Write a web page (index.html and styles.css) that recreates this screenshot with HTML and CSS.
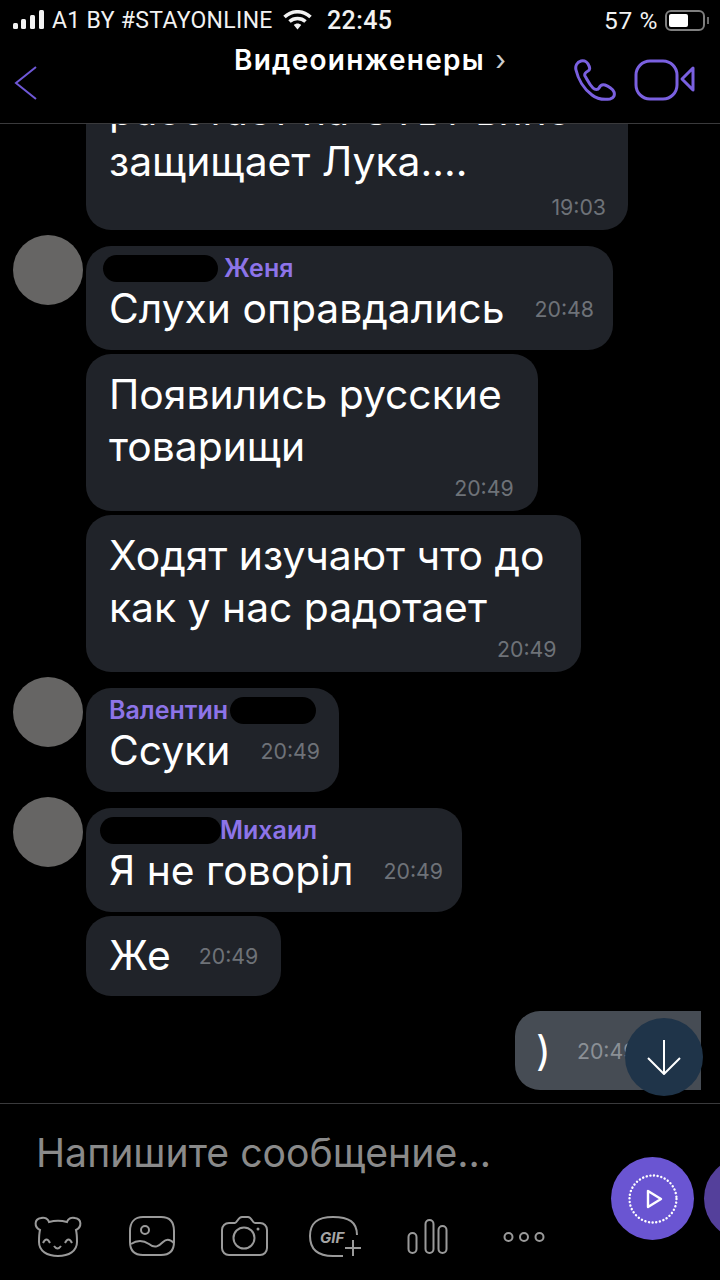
FILE: index.html
```html
<!DOCTYPE html>
<html lang="ru">
<head>
    <meta charset="UTF-8">
    <meta name="viewport" content="width=device-width, initial-scale=1.0">
    <title>Видеоинженеры</title>
    <link rel="stylesheet" href="styles.css">
</head>
<body>
    <div class="screen">
        <div class="status-bar">
            <svg class="signal" width="32" height="20" viewBox="0 0 32 20">
                <rect x="0" y="13" width="5" height="6" rx="1.5"/>
                <rect x="8" y="9" width="5" height="10" rx="1.5"/>
                <rect x="17" y="5" width="5" height="14" rx="1.5"/>
                <rect x="26" y="0" width="5" height="19" rx="1.5"/>
            </svg>
            <span class="carrier">A1 BY #STAYONLINE</span>
            <svg class="wifi" width="29" height="20" viewBox="0 0 29 20">
                <path d="M1.5 7 C9 0 20 0 27.5 7" />
                <path d="M6.5 11.5 C11 7.5 18 7.5 22.5 11.5" />
                <path class="wifi-dot" d="M10.8 15 C13 13 16 13 18.2 15 L14.5 19.5 Z" />
            </svg>
            <span class="clock">22:45</span>
            <span class="battery-text">57 %</span>
            <div class="battery"><div class="battery-fill"></div></div>
            <div class="battery-nub"></div>
        </div>

        <div class="nav">
            <svg class="back" width="24" height="36" viewBox="0 0 24 36">
                <path d="M22 2 L2 18 L22 34" />
            </svg>
            <div class="nav-title">Видеоинженеры <span class="nav-arrow">›</span></div>
            <svg class="nav-phone" width="42" height="42" viewBox="0 0 42 42">
                <path d="M7 2 C3 3 1 7 2 11 C4 20 10 30 18 36 C23 40 29 41 36 40 C40 39 41 36 40 33 C39 30 34 27 31 26 C28 25 26 27 25 29 C24 31 21 31 19 29 C15 25 13 20 11 17 C10 15 12 13 14 12 C16 11 16 9 15 7 C14 4 11 1 7 2 Z" />
            </svg>
            <svg class="nav-video" width="62" height="42" viewBox="0 0 62 42">
                <rect x="2" y="2" width="41" height="38" rx="14" />
                <path d="M59 9 L59 31 L48 20 Z" />
            </svg>
        </div>

        <div class="messages">
            <div class="row">
                <div class="avatar-space"></div>
                <div class="bubble bubble-long">
                    <div class="text">работает на СТБ? вино<br>защищает Лука....</div>
                    <div class="time time-below">19:03</div>
                </div>
            </div>

            <div class="row row-new">
                <div class="avatar"></div>
                <div class="bubble">
                    <div class="sender sender-a"><span class="redact redact-a"></span><span class="name">Женя</span></div>
                    <div class="line"><span class="text">Слухи оправдались</span><span class="time">20:48</span></div>
                </div>
            </div>

            <div class="row">
                <div class="avatar-space"></div>
                <div class="bubble bubble-lines">
                    <div class="text">Появились русские<br>товарищи</div>
                    <div class="time time-below">20:49</div>
                </div>
            </div>

            <div class="row">
                <div class="avatar-space"></div>
                <div class="bubble bubble-lines">
                    <div class="text">Ходят изучают что до<br>как у нас радотает</div>
                    <div class="time time-below">20:49</div>
                </div>
            </div>

            <div class="row row-new">
                <div class="avatar"></div>
                <div class="bubble">
                    <div class="sender"><span class="name">Валентин</span><span class="redact redact-b"></span></div>
                    <div class="line"><span class="text">Ссуки</span><span class="time">20:49</span></div>
                </div>
            </div>

            <div class="row row-new">
                <div class="avatar"></div>
                <div class="bubble">
                    <div class="sender sender-c"><span class="redact redact-c"></span><span class="name">Михаил</span></div>
                    <div class="line"><span class="text">Я не говоріл</span><span class="time">20:49</span></div>
                </div>
            </div>

            <div class="row">
                <div class="avatar-space"></div>
                <div class="bubble bubble-short">
                    <div class="line"><span class="text">Же</span><span class="time">20:49</span></div>
                </div>
            </div>

            <div class="row row-out">
                <div class="bubble bubble-out">
                    <div class="line"><span class="text">)</span><span class="time">20:49</span></div>
                </div>
            </div>

            <div class="scroll-down">
                <svg width="36" height="36" viewBox="0 0 36 36">
                    <path d="M18 1 L18 35 M2 19 L18 35 L34 19" />
                </svg>
            </div>
        </div>

        <div class="composer">
            <div class="composer-main">
                <div class="placeholder">Напишите сообщение...</div>
                <div class="tools">
                    <svg class="tool" viewBox="0 0 93 44">
                        <path d="M30 14 C24 11 24 3 31 2 C35 1 38 3 39 6 C44 4.500 52 4.500 57 6 C58 3 61 1 65 2 C72 3 72 11 66 14 C67 18 67 22 67 26 C67 35 59 40 48 40 C37 40 29 35 29 26 C29 22 29 18 30 14 Z" />
                        <path d="M33 27 Q36.500 20 40 27 M55 27 Q58.500 20 62 27 M44 30 Q47.500 35 51 30" />
                    </svg>
                    <svg class="tool" viewBox="0 0 93 44">
                        <path d="M40 1 L58 1 C67 1 71 6 71 15 L71 26 C71 35 66 39 58 39 L40 39 C32 39 27 35 27 26 L27 15 C27 6 32 1 40 1 Z" />
                        <circle cx="42" cy="14" r="4" />
                        <path d="M28 28 C34 24 40 24 46 28 C52 33 56 30 60 26 C64 22 68 24 71 27" />
                    </svg>
                    <svg class="tool" viewBox="0 0 93 44">
                        <path d="M33 7 L39 7 C41 7 42 1 46 1 L52 1 C56 1 56 7 59 7 L64 7 C68 7 71 10 71 14 L71 32 C71 36 68 39 64 39 L33 39 C29 39 26 36 26 32 L26 14 C26 10 29 7 33 7 Z" />
                        <circle cx="48" cy="22" r="10.500" />
                        <circle class="tool-fill" cx="62" cy="13" r="1.500" />
                    </svg>
                    <svg class="tool" viewBox="0 0 93 44">
                        <path d="M68 19 C68 6 60 1 44 1 C28 1 21 7 21 20 C21 33 28 40 44 40 L54 40" />
                        <path d="M64 24 L64 40 M56 32 L72 32" />
                        <text class="gif-label" x="31" y="27">GIF</text>
                    </svg>
                    <svg class="tool" viewBox="0 0 93 44">
                        <rect x="26.500" y="17" width="8" height="20" rx="4" />
                        <rect x="43.500" y="4" width="8" height="33" rx="4" />
                        <rect x="56.500" y="10" width="8" height="27" rx="4" />
                    </svg>
                    <svg class="tool" viewBox="0 0 93 44">
                        <circle cx="33.500" cy="21" r="4" />
                        <circle cx="49" cy="21" r="4" />
                        <circle cx="64.500" cy="21" r="4" />
                    </svg>
                </div>
            </div>
            <div class="composer-actions">
                <div class="round-btn">
                    <svg width="52" height="52" viewBox="0 0 52 52">
                        <circle class="ring" cx="26" cy="26" r="23.500" />
                        <path class="play" d="M21 18 L21 34 L34 26 Z" />
                    </svg>
                </div>
                <div class="round-btn round-btn-dim"></div>
            </div>
        </div>
    </div>
</body>
</html>
```

FILE: styles.css
```css
body {
    margin: 0;
    background: #000;
    font-family: 'Inter', 'Roboto', sans-serif;
    color: #fff;
}

.screen {
    width: 720px;
    height: 1280px;
    display: flex;
    flex-direction: column;
    overflow: hidden;
    background: #000;
}

/* status bar */
.status-bar {
    height: 40px;
    flex: none;
    display: flex;
    align-items: center;
    padding-left: 13px;
    font-family: 'Roboto', sans-serif;
    font-size: 23px;
    color: #f2f2f2;
}

.signal {
    fill: #f2f2f2;
}

.carrier {
    margin-left: 7px;
    width: 231px;
    letter-spacing: 0.32px;
}

.wifi {
    fill: none;
    stroke: #f2f2f2;
    stroke-width: 3.6;
}

.wifi-dot {
    fill: #f2f2f2;
    stroke: none;
}

.clock {
    margin-left: 15px;
    font-size: 25px;
    font-weight: 500;
    letter-spacing: 0.4px;
}

.battery-text {
    margin-left: auto;
    font-size: 24.5px;
    letter-spacing: 0.6px;
}

.battery {
    width: 40px;
    height: 21px;
    box-sizing: border-box;
    margin-left: 7px;
    padding: 2px;
    border: 2px solid #7f7f7f;
    border-radius: 6px;
}

.battery-fill {
    width: 19px;
    height: 100%;
    background: #fff;
    border-radius: 2px;
}

.battery-nub {
    width: 2px;
    height: 7px;
    margin: 0 11px 0 2px;
    background: #6a6a6a;
}

/* nav */
.nav {
    height: 83px;
    flex: none;
    display: flex;
    align-items: flex-start;
    border-bottom: 1px solid #3a3a3c;
}

.back {
    margin: 25px 0 0 14px;
    fill: none;
    stroke: #6f58d8;
    stroke-width: 2;
}

.nav-title {
    width: 300px;
    margin: 2px 0 0 196px;
    white-space: nowrap;
    font-size: 28px;
    font-weight: 600;
    letter-spacing: 1.25px;
    line-height: 36px;
}

.nav-arrow {
    margin-left: 2px;
    font-weight: 400;
    color: #ccc;
}

.nav-phone {
    margin: 19px 0 0 40px;
    fill: none;
    stroke: #7a60e0;
    stroke-width: 3;
}

.nav-video {
    margin: 19px 0 0 18px;
    fill: none;
    stroke: #7a60e0;
    stroke-width: 3;
    stroke-linejoin: round;
}

/* messages */
.messages {
    position: relative;
    flex: 1;
    min-height: 0;
    display: flex;
    flex-direction: column;
    justify-content: flex-end;
    gap: 4px;
    padding-bottom: 13px;
    overflow: hidden;
}

.row {
    flex: none;
    display: flex;
    align-items: flex-start;
    padding-left: 13px;
}

.row-new {
    margin-top: 12px;
}

.row-out {
    justify-content: flex-end;
    margin-top: 11px;
    padding-right: 19px;
}

.avatar,
.avatar-space {
    width: 70px;
    height: 70px;
    flex: none;
    margin-right: 3px;
}

.avatar {
    margin-top: -11px;
    border-radius: 50%;
    background: #666564;
}

.avatar-space {
    height: 0;
}

.bubble {
    box-sizing: border-box;
    padding: 14px 24px 8px 23px;
    background: #202329;
    border-radius: 25px;
}

.bubble:has(.sender) {
    padding: 9px 19px 16px 23px;
}

.bubble-lines {
    padding-right: 36px;
}

.bubble-lines .time-below {
    margin-right: -12px;
}

.bubble-short {
    padding: 13px 23px 15px 23px;
}

.bubble-long {
    width: 542px;
}

.bubble-long .text {
    line-height: 51px;
}

.bubble-long .time-below {
    margin-top: 4px;
    margin-right: -2px;
}

.bubble-out {
    padding: 13px 0 14px 21px;
    width: 186px;
    background: #464c54;
    border-radius: 25px 0 0 25px;
}

.sender {
    height: 27px;
    display: flex;
    align-items: center;
}

.sender-a {
    margin-left: -6px;
}

.sender-c {
    margin-left: -9px;
}

.name {
    padding-bottom: 1px;
    font-size: 25px;
    font-weight: 600;
    line-height: 25px;
    color: #8d74e8;
    white-space: nowrap;
}

.redact {
    height: 27px;
    background: #000;
    border-radius: 14px;
}

.redact-a {
    width: 115px;
    margin-right: 6px;
}

.redact-b {
    width: 86px;
    margin-left: 2px;
}

.redact-c {
    width: 121px;
    margin-right: -1px;
}

.text {
    font-size: 40.8px;
    line-height: 52px;
    color: #fff;
    white-space: nowrap;
}

.line {
    display: flex;
    align-items: center;
    gap: 30px;
}

.line .time {
    margin-top: 2px;
}

.time {
    font-size: 21.3px;
    line-height: 30px;
    color: #6e7278;
    white-space: nowrap;
}

.time-below {
    padding-top: 1px;
    text-align: right;
}

.bubble-short .line {
    gap: 28px;
}

.bubble-out .line {
    gap: 26px;
}

.bubble-out .time {
    color: #8b9096;
}

.scroll-down {
    position: absolute;
    right: 17px;
    bottom: 7px;
    width: 78px;
    height: 78px;
    display: flex;
    align-items: center;
    justify-content: center;
    border-radius: 50%;
    background: #1f3449;
}

.scroll-down svg {
    fill: none;
    stroke: #fff;
    stroke-width: 2;
}

/* composer */
.composer {
    height: 176px;
    flex: none;
    display: flex;
    border-top: 1px solid #3a3a3c;
    overflow: hidden;
}

.composer-main {
    width: 611px;
    flex: none;
}

.placeholder {
    margin-top: 25px;
    padding-left: 36px;
    font-size: 39.2px;
    line-height: 48px;
    color: #8a8a8a;
    white-space: nowrap;
}

.tools {
    display: flex;
    margin-top: 39px;
    padding-left: 10px;
}

.tool {
    width: 93px;
    height: 44px;
    flex: none;
    fill: none;
    stroke: #9a9a9a;
    stroke-width: 2;
}

.tool-fill {
    fill: #9a9a9a;
    stroke: none;
}

.gif-label {
    font-family: 'Inter', sans-serif;
    font-size: 15px;
    font-weight: 700;
    font-style: italic;
    fill: #a5a5a5;
    stroke: none;
}

.composer-actions {
    flex: none;
    display: flex;
    gap: 10px;
    padding-top: 53px;
}

.round-btn {
    width: 83px;
    height: 83px;
    flex: none;
    display: flex;
    align-items: center;
    justify-content: center;
    border-radius: 50%;
    background: #6a55d2;
}

.round-btn-dim {
    background: #54409b;
}

.ring {
    fill: none;
    stroke: #fff;
    stroke-width: 2.4;
    stroke-linecap: round;
    stroke-dasharray: 0.1 3.6;
}

.play {
    fill: none;
    stroke: #fff;
    stroke-width: 2.4;
    stroke-linejoin: round;
}
```
